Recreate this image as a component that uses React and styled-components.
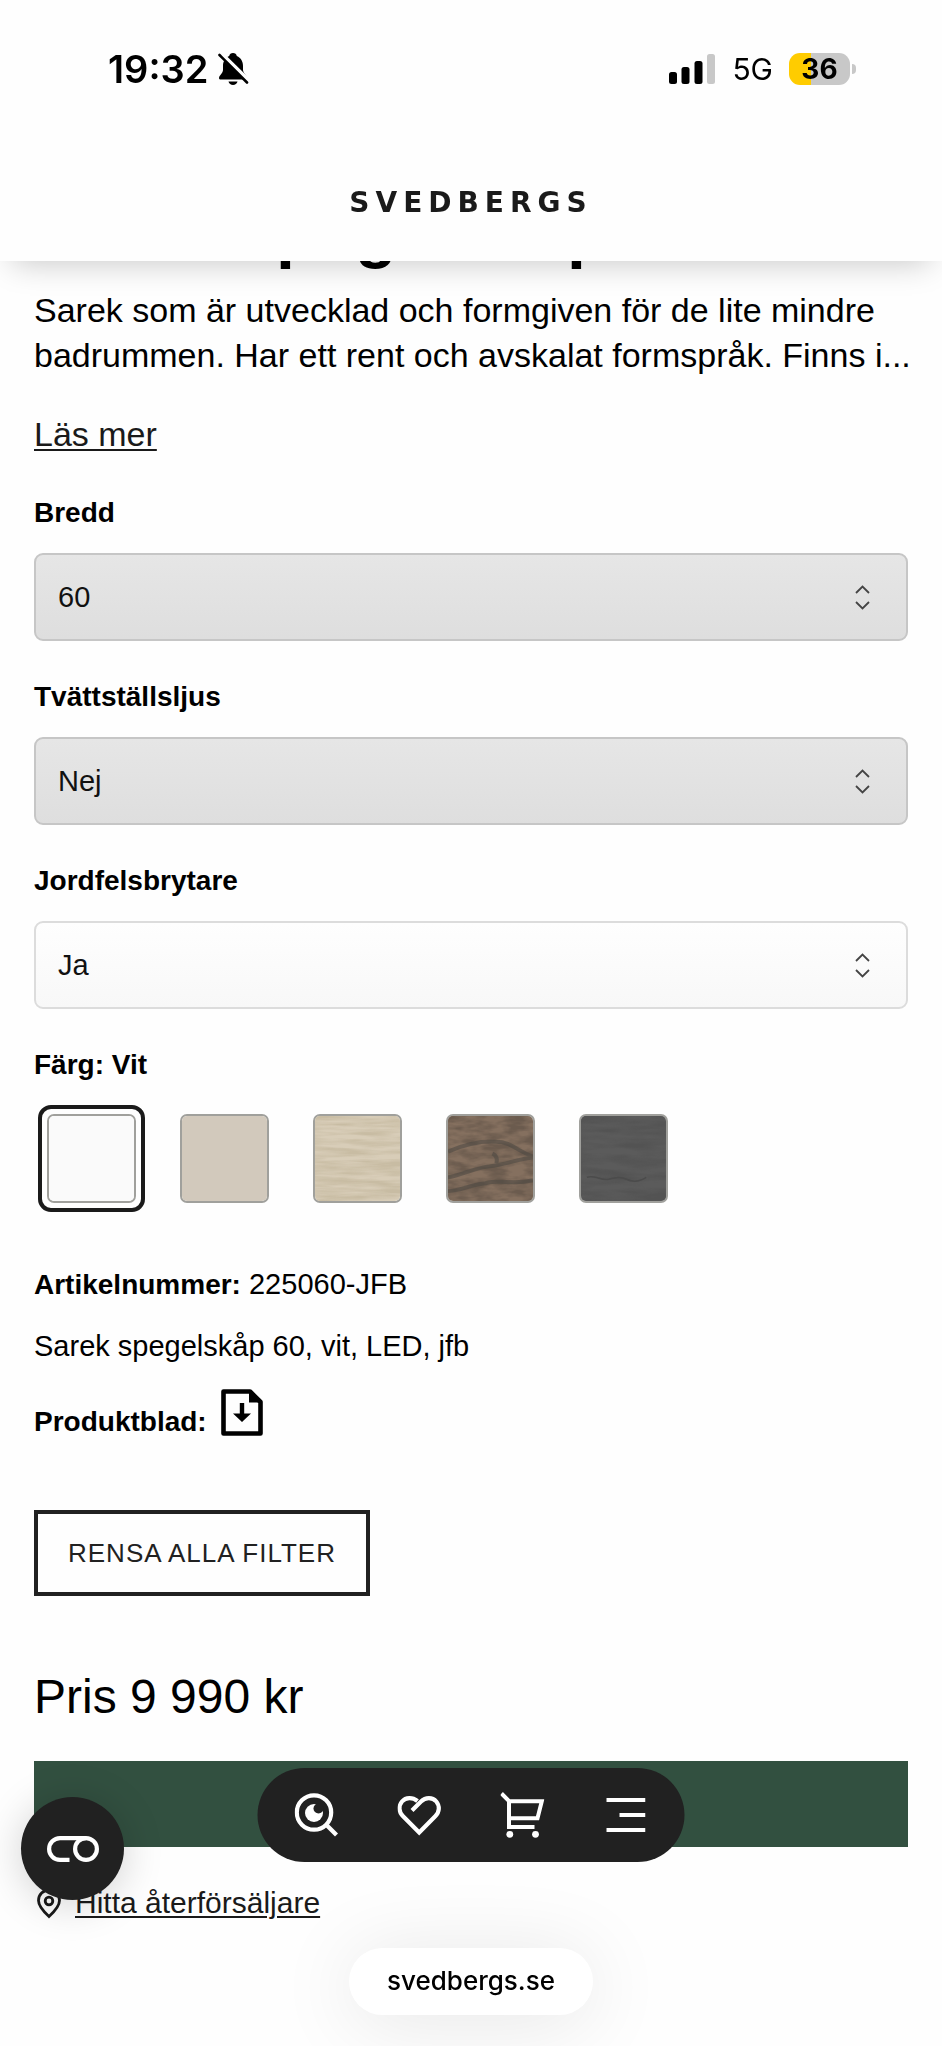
import React, { useState } from 'react';
import styled, { createGlobalStyle } from 'styled-components';

const GlobalStyle = createGlobalStyle`
    * {
        box-sizing: border-box;
    }

    body {
        margin: 0;
        background: #FEFEFE;
        color: #000;
        font-family: "Liberation Sans", Arial, sans-serif;
        font-size: 29px;
        line-height: 36px;
    }

    button, select {
        font-family: inherit;
    }
`

const Header = styled.header`
    position: fixed;
    top: 0;
    left: 0;
    right: 0;
    z-index: 10;
    background: #FEFEFE;
    box-shadow: 0 14px 30px -12px rgba(0, 0, 0, 0.22);
`

const StatusBar = styled.div`
    display: flex;
    justify-content: space-between;
    align-items: center;
    height: 138px;
    padding: 0 86px 0 108px;
    font-family: Inter, sans-serif;
`

const StatusGroup = styled.div`
    display: flex;
    align-items: center;
    gap: ${props => props.$gap};
`

const Clock = styled.time`
    font-size: 38px;
    font-weight: 600;
`

const Network = styled.span`
    font-size: 30px;
`

const Battery = styled.div`
    display: flex;
    align-items: center;
    gap: 2px;

    &::after {
        content: '';
        width: 4px;
        height: 10px;
        border-radius: 0 4px 4px 0;
        background: #C8C8C8;
    }
`

const BatteryLevel = styled.span`
    width: 61px;
    height: 32px;
    border-radius: 11px;
    background: linear-gradient(90deg, #FFCC00 36%, #C8C8C8 36%);
    font-size: 28px;
    font-weight: 700;
    line-height: 32px;
    text-align: center;
`

const BrandBar = styled.div`
    display: flex;
    justify-content: center;
    align-items: center;
    height: 123px;
    padding-top: 6px;
`

const Brand = styled.a`
    color: #1A1A1A;
    font-family: "DejaVu Sans", sans-serif;
    font-size: 28px;
    font-weight: 700;
    letter-spacing: 6px;
    text-decoration: none;
`

const Main = styled.main`
    padding: 193px 34px 126px;
`

const Title = styled.h1`
    margin: 0 0 19px;
    font-size: 68px;
    font-weight: 700;
    line-height: 76px;
`

const Description = styled.p`
    margin: 0 -16px 34px 0;
    font-size: 34px;
    line-height: 45px;
`

const TextLink = styled.a`
    color: #1A1A1A;
    font-size: ${props => props.$size};
    text-decoration: underline;
    text-decoration-thickness: 2px;
    text-underline-offset: 3px;
`

const ReadMore = styled.div`
    margin-bottom: 36px;
    line-height: 45px;
`

const Field = styled.div`
    margin-bottom: 38px;
`

const FieldLabel = styled.label`
    display: block;
    margin-bottom: 22px;
    font-size: 28px;
    font-weight: 700;
`

const SelectWrap = styled.div`
    position: relative;

    svg {
        position: absolute;
        top: 32px;
        right: 38px;
        pointer-events: none;
    }
`

const Select = styled.select`
    display: block;
    width: 100%;
    height: 88px;
    padding: 0 22px;
    appearance: none;
    border: 2px solid ${props => props.$shaded ? '#C6C6C6' : '#DCDCDC'};
    border-radius: 9px;
    background: ${props => props.$shaded
        ? 'linear-gradient(#E6E6E6, #DEDEDE)'
        : 'linear-gradient(#FEFEFE, #F8F8F8)'};
    color: #111;
    font-size: 29px;
`

const ColorField = styled.fieldset`
    margin: 0 0 54px;
    padding: 0;
    border: none;
`

const ColorLegend = styled.legend`
    margin-bottom: 22px;
    padding: 0;
    font-size: 28px;
    font-weight: 700;
`

const SwatchRow = styled.div`
    display: flex;
    flex-wrap: wrap;
    gap: 26px;
    padding-left: 4px;
`

const Swatch = styled.label`
    display: block;
    width: 107px;
    height: 107px;
    padding: 5px;
    border: 4px solid transparent;
    border-radius: 13px;

    &:has(input:checked) {
        border-color: #1A1A1A;
    }

    input {
        position: absolute;
        opacity: 0;
    }

    svg {
        display: block;
        width: 89px;
        height: 89px;
        border: 2px solid #A0A09C;
        border-radius: 7px;
    }
`

const Detail = styled.p`
    margin: 0 0 25px;
`

const Strong = styled.strong`
    font-size: 28px;
`

const SheetRow = styled.div`
    display: flex;
    align-items: flex-end;
    gap: 14px;
    margin-bottom: 70px;

    a {
        padding-bottom: 4px;
        color: #000;
    }

    svg {
        display: block;
    }
`

const ClearButton = styled.button`
    display: block;
    height: 86px;
    margin-bottom: 73px;
    padding: 0 30px;
    border: 4px solid #212121;
    background: transparent;
    color: #212121;
    font-size: 26px;
    letter-spacing: 1px;
    text-transform: uppercase;
`

const Price = styled.p`
    margin: 0 0 36px;
    font-size: 48px;
    line-height: 56px;
`

const BuyButton = styled.button`
    display: block;
    width: 100%;
    height: 86px;
    margin-bottom: 38px;
    border: none;
    background: #325040;
`

const RetailerRow = styled.div`
    display: flex;
    align-items: center;
    gap: 13px;
`

const BottomNav = styled.nav`
    position: fixed;
    bottom: 184px;
    left: 50%;
    z-index: 10;
    display: flex;
    align-items: center;
    gap: 59px;
    height: 94px;
    padding: 0 37px;
    border-radius: 47px;
    background: #212121;
    transform: translateX(-50%);
`

const NavButton = styled.button`
    display: flex;
    justify-content: center;
    width: 44px;
    padding: 0;
    border: none;
    background: none;
    color: #FFF;
`

const ConsentButton = styled.button`
    position: fixed;
    bottom: 146px;
    left: 21px;
    z-index: 11;
    display: flex;
    justify-content: center;
    align-items: center;
    width: 103px;
    height: 103px;
    padding: 0;
    border: none;
    border-radius: 50%;
    background: #212121;
    box-shadow: 0 4px 40px rgba(0, 0, 0, 0.18);
    color: #FFF;
`

const AddressPill = styled.div`
    position: fixed;
    bottom: 31px;
    left: 50%;
    z-index: 9;
    padding: 15px 38px 16px;
    border-radius: 34px;
    background: #FFF;
    box-shadow: 0 6px 80px rgba(0, 0, 0, 0.1);
    font-family: Inter, sans-serif;
    font-size: 26px;
    font-weight: 500;
    transform: translateX(-50%);
`

const MutedBell = () => (
    <svg width="31" height="34" viewBox="0 0 31 34" aria-hidden="true">
        <path d="M15 1c-2 0-3.500 1.300-3.800 3C7 6 5 9.500 5 14v4c0 3-4 5.500-4 8 0 1 .8 1.500 2 1.500h24c1.200 0 2-.5 2-1.500 0-2.500-4-5-4-8v-4c0-4.500-2-8-6.200-10C18.500 2.300 17 1 15 1z" />
        <path d="M10.500 29.500h9c-.5 2.200-2.300 3.500-4.500 3.500s-4-1.300-4.500-3.500z" />
        <path d="M2.500 1.500L31.500 30" stroke="#FEFEFE" strokeWidth="5" />
        <path d="M1.500 3L29 30.500" stroke="#000" strokeWidth="2.600" strokeLinecap="round" />
    </svg>
)

const Signal = () => (
    <svg width="48" height="30" viewBox="0 0 48 30" aria-hidden="true">
        <rect x="1" y="18" width="8" height="12" rx="2.500" />
        <rect x="13.500" y="13" width="8" height="17" rx="2.500" />
        <rect x="26.500" y="7" width="8" height="23" rx="2.500" />
        <rect x="39" y="0" width="8" height="30" rx="2.500" fill="#C8C8C8" />
    </svg>
)

const Chevrons = () => (
    <svg width="15" height="25" viewBox="0 0 15 25" fill="none" stroke="#444" strokeWidth="1.800" aria-hidden="true">
        <path d="M1 8l6.500-6.500L14 8M1 17l6.500 6.500L14 17" />
    </svg>
)

const SheetIcon = () => (
    <svg width="42" height="47" viewBox="0 0 42 47" aria-hidden="true">
        <path d="M2.500 2.500H29L39.500 13v31.500h-37z" fill="none" stroke="currentColor" strokeWidth="4.600" strokeLinejoin="round" />
        <path d="M28 3v10.500h11z" />
        <path d="M18.800 14h4.400v10.500H30L21 33l-9-8.500h6.800z" />
    </svg>
)

const PinIcon = () => (
    <svg width="28" height="32" viewBox="0 0 28 32" fill="none" stroke="#1A1A1A" strokeWidth="2.800" aria-hidden="true">
        <path d="M15 29.500C9 24 4.500 19 4.500 13.500a10.500 10.500 0 0 1 21 0C25.500 19 21 24 15 29.500z" />
        <circle cx="15" cy="14" r="3.800" />
    </svg>
)

const SearchIcon = () => (
    <svg width="44" height="44" viewBox="0 0 44 44" aria-hidden="true">
        <g fill="none" stroke="currentColor" strokeWidth="4.200">
            <circle cx="19.500" cy="19.500" r="17.200" />
            <path d="M31.500 31.500L42 42" />
        </g>
        <circle cx="19.500" cy="20" r="9" fill="currentColor" />
        <circle cx="24" cy="15.500" r="5" fill="#212121" />
    </svg>
)

const HeartIcon = () => (
    <svg width="44" height="44" viewBox="0 0 44 44" fill="none" stroke="currentColor" strokeWidth="4.200" aria-hidden="true">
        <path d="M14.500 17.500l9-9C28 4 35 4 38.800 8.500c3.700 4.500 3.200 10.500-.8 14.500L21.700 39.500 5.300 23c-4-4-4.500-10-.8-14.500C8.300 4 15 4 20 8" />
    </svg>
)

const CartIcon = () => (
    <svg width="44" height="46" viewBox="0 0 44 46" fill="none" stroke="currentColor" strokeWidth="4" aria-hidden="true">
        <path d="M1 1.500L8.500 9v26H34M8.500 9.300h32.800L37 26.300H8.500" />
        <g fill="currentColor" stroke="none">
            <circle cx="9.300" cy="42.300" r="3.400" />
            <circle cx="35" cy="42.300" r="3.400" />
        </g>
    </svg>
)

const MenuIcon = () => (
    <svg width="40" height="34" viewBox="0 0 40 34" stroke="currentColor" strokeWidth="4" aria-hidden="true">
        <path d="M1 2h39M14 17h26M1 32h39" />
    </svg>
)

const ConsentIcon = () => (
    <svg width="52" height="26" viewBox="0 0 52 26" fill="none" stroke="currentColor" strokeWidth="4.200" aria-hidden="true">
        <path d="M22.500 23.900H13a10.900 10.900 0 0 1 0-21.800h26" />
        <circle cx="39" cy="13" r="10.900" />
    </svg>
)

// Paint chips are flat, wood chips get a stretched noise grain on top
const Chip = ({ id, base, grain, frequency, children }) => (
    <svg viewBox="0 0 86 86" aria-hidden="true">
        <rect width="86" height="86" fill={base} />
        {grain && (
            <>
                <filter id={id} x="0" y="0" width="100%" height="100%" colorInterpolationFilters="sRGB">
                    <feTurbulence type="fractalNoise" baseFrequency={frequency} numOctaves="3" seed="4" result="noise" />
                    <feColorMatrix in="noise" type="matrix" values="0 0 0 0 0  0 0 0 0 0  0 0 0 0 0  2.500 0 0 0 -0.800" result="mask" />
                    <feFlood floodColor={grain} />
                    <feComposite in2="mask" operator="in" />
                </filter>
                <rect width="86" height="86" filter={`url(#${id})`} />
            </>
        )}
        {children}
    </svg>
)

const fields = [
    { id: 'bredd', label: 'Bredd', value: '60', shaded: true },
    { id: 'ljus', label: 'Tvättställsljus', value: 'Nej', shaded: true },
    { id: 'jordfel', label: 'Jordfelsbrytare', value: 'Ja', shaded: false },
]

const colors = [
    { name: 'Vit', base: '#FAFAFA' },
    { name: 'Beige', base: '#D2C9BC' },
    { name: 'Ljus ek', base: '#D8CDB8', grain: '#C8BCA3', frequency: '0.02 0.2' },
    {
        name: 'Mörk ek',
        base: '#85705F',
        grain: '#6B5B4E',
        frequency: '0.05 0.14',
        veins: (
            <g fill="none" stroke="#4C4842" strokeWidth="4" opacity="0.55">
                <path d="M0 36c14-6 32-11 49-10 14 0 22 10 37 15" />
                <path d="M0 62c12-1 24-9 42-11 20-3 31-8 44-9" />
                <path d="M0 76c12 0 24-7 38-8 16-4 28 2 48-3" />
                <path d="M45 38c4 2 5 6 4 10" />
            </g>
        ),
    },
    {
        name: 'Svart ek',
        base: '#5B5B5B',
        grain: '#535353',
        frequency: '0.02 0.12',
        veins: (
            <path d="M6 62c8-3 14 4 22 2s12-3 18 0 12 3 20-2" fill="none" stroke="#4B4B4B" strokeWidth="1.500" />
        ),
    },
]

const SelectField = ({ id, label, value, shaded }) => (
    <Field>
        <FieldLabel htmlFor={id}>{label}</FieldLabel>
        <SelectWrap>
            <Select id={id} name={id} $shaded={shaded}>
                <option>{value}</option>
            </Select>
            <Chevrons />
        </SelectWrap>
    </Field>
)

const App = () => {
    const [color, setColor] = useState('Vit');

    return (
        <>
            <GlobalStyle />
            <Header>
                <StatusBar>
                    <StatusGroup $gap="10px">
                        <Clock>19:32</Clock>
                        <MutedBell />
                    </StatusGroup>
                    <StatusGroup $gap="16px">
                        <Signal />
                        <Network>5G</Network>
                        <Battery>
                            <BatteryLevel>36</BatteryLevel>
                        </Battery>
                    </StatusGroup>
                </StatusBar>
                <BrandBar>
                    <Brand href="/">SVEDBERGS</Brand>
                </BrandBar>
            </Header>

            <Main>
                <Title>Sarek spegelskåp</Title>
                <Description>
                    Sarek som är utvecklad och formgiven för de lite mindre
                    badrummen. Har ett rent och avskalat formspråk. Finns i...
                </Description>
                <ReadMore>
                    <TextLink href="#mer" $size="34px">Läs mer</TextLink>
                </ReadMore>

                {fields.map(field => <SelectField key={field.id} {...field} />)}

                <ColorField>
                    <ColorLegend>Färg: {color}</ColorLegend>
                    <SwatchRow>
                        {colors.map(({ name, veins, ...chip }, i) => (
                            <Swatch key={name}>
                                <input
                                    type="radio"
                                    name="color"
                                    aria-label={name}
                                    checked={color === name}
                                    onChange={() => setColor(name)}
                                />
                                <Chip id={`grain-${i}`} {...chip}>{veins}</Chip>
                            </Swatch>
                        ))}
                    </SwatchRow>
                </ColorField>

                <Detail><Strong>Artikelnummer:</Strong> 225060-JFB</Detail>
                <Detail>Sarek spegelskåp 60, vit, LED, jfb</Detail>
                <SheetRow>
                    <Strong>Produktblad:</Strong>
                    <a href="#produktblad" aria-label="Ladda ner produktblad"><SheetIcon /></a>
                </SheetRow>

                <ClearButton type="button">Rensa alla filter</ClearButton>

                <Price>Pris 9 990 kr</Price>
                <BuyButton type="button" aria-label="Köp" />
                <RetailerRow>
                    <PinIcon />
                    <TextLink href="#aterforsaljare" $size="30px">Hitta återförsäljare</TextLink>
                </RetailerRow>
            </Main>

            <ConsentButton type="button" aria-label="Cookies"><ConsentIcon /></ConsentButton>
            <BottomNav>
                <NavButton type="button" aria-label="Sök"><SearchIcon /></NavButton>
                <NavButton type="button" aria-label="Favoriter"><HeartIcon /></NavButton>
                <NavButton type="button" aria-label="Varukorg"><CartIcon /></NavButton>
                <NavButton type="button" aria-label="Meny"><MenuIcon /></NavButton>
            </BottomNav>
            <AddressPill>svedbergs.se</AddressPill>
        </>
    )
}

export default App;
